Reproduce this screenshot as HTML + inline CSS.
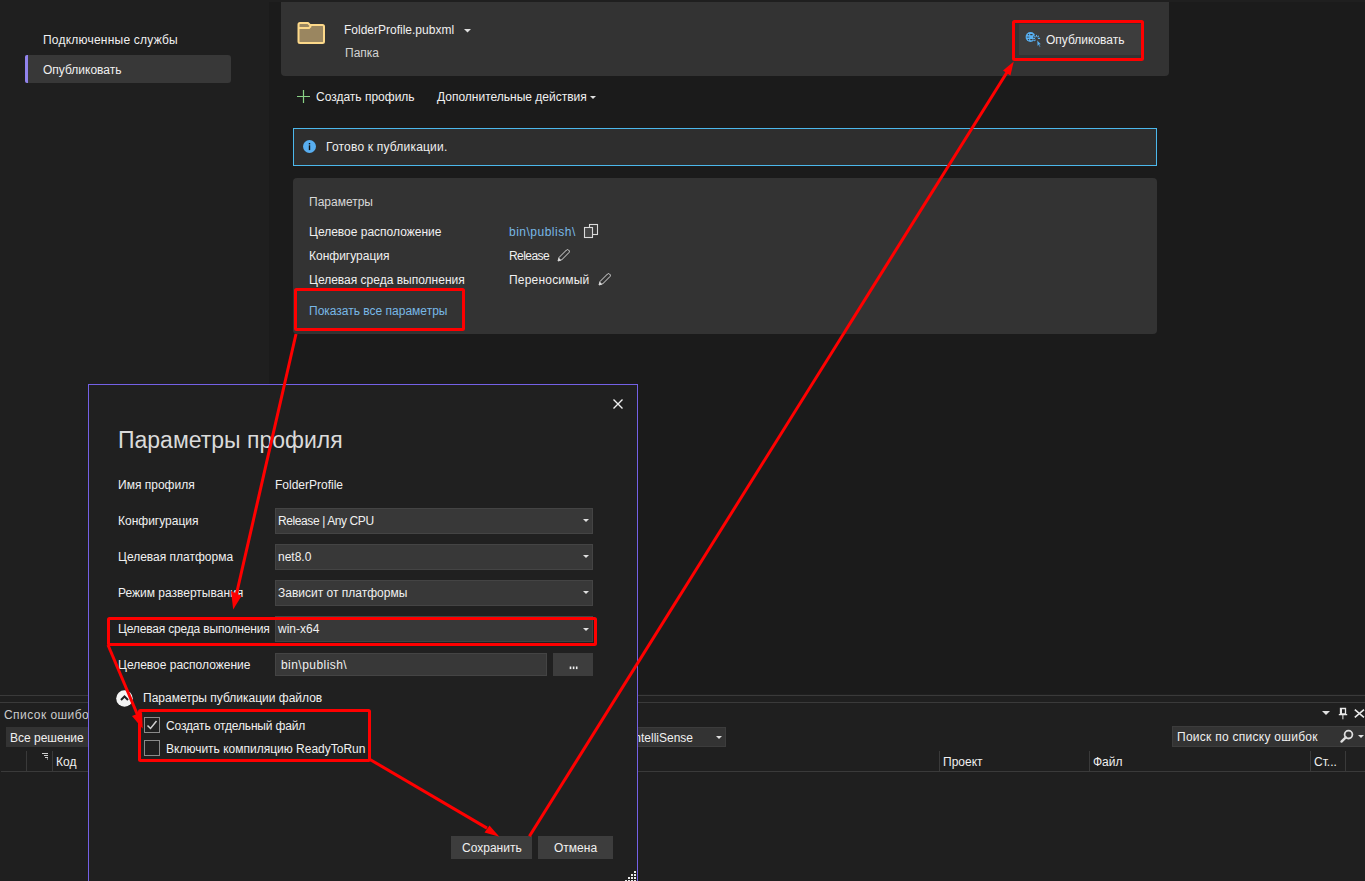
<!DOCTYPE html>
<html><head><meta charset="utf-8">
<style>
*{margin:0;padding:0;box-sizing:border-box}
html,body{width:1365px;height:881px;overflow:hidden;background:#1f1f1f;font-family:"Liberation Sans",sans-serif;font-size:12px;color:#f0f0f0;position:relative}
.a{position:absolute;white-space:nowrap}
.t{position:absolute;white-space:nowrap;line-height:14px}
svg{position:absolute;overflow:visible}
.cb{position:absolute;background:#383838;border:1px solid #444444}
</style></head><body>
<!-- sidebar -->
<div class="t" style="left:43px;top:33px;letter-spacing:0.22px">Подключенные службы</div>
<div class="a" style="left:25px;top:55px;width:206px;height:28px;background:#383838;border-radius:3px"></div>
<div class="a" style="left:25px;top:55px;width:3px;height:28px;background:#9183ec;border-radius:2px 0 0 2px"></div>
<div class="t" style="left:43px;top:63px">Опубликовать</div>

<!-- main area -->
<div class="a" style="left:269px;top:2px;width:1096px;height:692px;background:#1b1b1b"></div>

<!-- header card -->
<div class="a" style="left:281px;top:2px;width:888px;height:74px;background:#333333;border-radius:0 0 4px 4px"></div>
<svg style="left:297px;top:22px" width="28" height="22" viewBox="0 0 28 22">
  <path d="M1.5 2.5 Q1.5 1 3 1 H11 L13 3 H25.5 Q27 3 27 4.5 V19.5 Q27 21 25.5 21 H3 Q1.5 21 1.5 19.5 Z" fill="#9a8660" stroke="#fdd98a" stroke-width="2" stroke-linejoin="round"/>
  <path d="M2 6 H12 L14 4" fill="none" stroke="#fdd98a" stroke-width="2"/>
</svg>
<div class="t" style="left:344px;top:23px">FolderProfile.pubxml</div>
<svg style="left:464px;top:29px" width="8" height="4"><path d="M0 0 H7 L3.5 3.5Z" fill="#e0e0e0"/></svg>
<div class="t" style="left:345px;top:46px;color:#d4d4d4">Папка</div>

<!-- publish button -->
<div class="a" style="left:1019px;top:24px;width:122px;height:31px;background:#3d3d3d"></div>
<svg style="left:1022px;top:29px" width="22" height="20" viewBox="0 0 22 20">
  <circle cx="8.5" cy="8" r="4.9" fill="#58b0f2"/>
  <circle cx="14.5" cy="9.2" r="3.4" fill="#3d3d3d"/>
  <g fill="#3a3a3a">
    <rect x="5.8" y="4.9" width="1.4" height="1.3" rx="0.6"/>
    <rect x="8.1" y="4.9" width="2.6" height="1.3" rx="0.6"/>
    <rect x="4.6" y="7.4" width="2.9" height="1.3" rx="0.6" fill-opacity="0.6"/>
    <rect x="5.8" y="9.9" width="1.4" height="1.3" rx="0.6"/>
    <rect x="8.1" y="9.9" width="2.6" height="1.3" rx="0.6"/>
  </g>
  <g stroke="#58b0f2" stroke-width="1.1" stroke-linecap="round">
    <path d="M14.5 6.2 V7.2 M12.6 7.2 L13.2 7.8 M16.4 7.2 L15.8 7.8 M11.6 9.4 H12.6 M16.4 9.4 H17.6 M12.6 11.6 L13.2 11"/>
  </g>
  <path d="M15 11 L15.3 17.2 L16.6 16 L17.7 18.2 L18.5 17.8 L17.5 15.6 L19 15.2 Z" fill="#58b0f2" stroke="#3d3d3d" stroke-width="0.5"/>
</svg>
<div class="t" style="left:1046px;top:33px">Опубликовать</div>

<!-- action row -->
<svg style="left:297px;top:90px" width="13" height="13"><path d="M6.5 0 V13 M0 6.5 H13" stroke="#89d185" stroke-width="1.2"/></svg>
<div class="t" style="left:316px;top:90px">Создать профиль</div>
<div class="t" style="left:437px;top:90px">Дополнительные действия</div>
<svg style="left:590px;top:96px" width="7" height="4"><path d="M0 0 H6 L3 3Z" fill="#e0e0e0"/></svg>

<!-- info bar -->
<div class="a" style="left:293px;top:128px;width:864px;height:38px;background:#2e2e2e;border:1px solid #4cb8ec"></div>
<svg style="left:303px;top:140px" width="13" height="13" viewBox="0 0 13 13">
  <circle cx="6.5" cy="6.5" r="6.5" fill="#58aef0"/>
  <rect x="5.8" y="5.3" width="1.4" height="4.8" fill="#111"/>
  <rect x="5.8" y="3" width="1.4" height="1.4" fill="#111"/>
</svg>
<div class="t" style="left:326px;top:140px;letter-spacing:0.2px">Готово к публикации.</div>

<!-- params card -->
<div class="a" style="left:293px;top:178px;width:864px;height:156px;background:#333333;border-radius:4px"></div>
<div class="t" style="left:309px;top:195px;color:#d8d8d8">Параметры</div>
<div class="t" style="left:309px;top:225px">Целевое расположение</div>
<div class="t" style="left:309px;top:249px">Конфигурация</div>
<div class="t" style="left:309px;top:273px">Целевая среда выполнения</div>
<div class="t" style="left:509px;top:225px;color:#78b8e6;letter-spacing:0.5px">bin\publish\</div>
<svg style="left:584px;top:224px" width="15" height="15" viewBox="0 0 15 15">
  <rect x="5.5" y="0.5" width="8" height="10" fill="#3a3a3a" stroke="#dadada" stroke-width="1.1"/>
  <rect x="0.5" y="3.5" width="8" height="10" fill="#444" stroke="#dadada" stroke-width="1.1"/>
</svg>
<div class="t" style="left:509px;top:249px;letter-spacing:-0.55px">Release</div>
<svg style="left:557px;top:249px" width="13" height="13" viewBox="0 0 13 13">
  <path d="M1 12 L2 8.5 L9.5 1 Q10.5 0.2 11.5 1 L12 1.5 Q12.8 2.5 12 3.5 L4.5 11 Z" fill="none" stroke="#dcdcdc" stroke-width="1"/>
  <path d="M1 12 L2 9 L4 11Z" fill="#dcdcdc"/>
</svg>
<div class="t" style="left:509px;top:273px;letter-spacing:0.2px">Переносимый</div>
<svg style="left:598px;top:273px" width="13" height="13" viewBox="0 0 13 13">
  <path d="M1 12 L2 8.5 L9.5 1 Q10.5 0.2 11.5 1 L12 1.5 Q12.8 2.5 12 3.5 L4.5 11 Z" fill="none" stroke="#dcdcdc" stroke-width="1"/>
  <path d="M1 12 L2 9 L4 11Z" fill="#dcdcdc"/>
</svg>
<div class="t" style="left:309px;top:304px;color:#78b8e6">Показать все параметры</div>

<!-- bottom panel (error list) -->
<div class="a" style="left:0;top:694px;width:1365px;height:187px;background:#1f1f1f"></div>
<div class="a" style="left:0;top:695px;width:1365px;height:1px;background:#3a3a3a"></div>
<div class="a" style="left:0;top:702px;width:1365px;height:1px;background:#3a3a3a"></div>
<div class="t" style="left:4px;top:708px;color:#cccccc;letter-spacing:0.45px">Список ошибок</div>
<svg style="left:1322px;top:711px" width="8" height="5"><path d="M0 0 H8 L4 4Z" fill="#e0e0e0"/></svg>
<svg style="left:1338px;top:707px" width="10" height="13" viewBox="0 0 10 13">
  <path d="M2.5 1.5 H7.5 V7 H2.5 Z" fill="none" stroke="#e8e8e8" stroke-width="1.3"/>
  <rect x="2" y="1" width="2" height="6.5" fill="#e8e8e8"/>
  <path d="M0.8 7.6 H9.2" stroke="#e8e8e8" stroke-width="1.3"/><path d="M4.9 7.6 V12.3" stroke="#e8e8e8" stroke-width="1"/>
</svg>
<svg style="left:1354px;top:709px" width="11" height="9" viewBox="0 0 11 9"><path d="M0.8 0.6 L10 8.4 M10 0.6 L0.8 8.4" stroke="#e8e8e8" stroke-width="1.6"/></svg>

<div class="a" style="left:6px;top:727px;width:120px;height:20px;background:#333333"></div>
<div class="t" style="left:10px;top:731px">Все решение</div>

<div class="a" style="left:560px;top:727px;width:166px;height:20px;background:#333333;border:1px solid #3c3c3c"></div>
<div class="t" style="left:560px;top:731px;text-align:right;width:133px">Сборка + IntelliSense</div>
<svg style="left:716px;top:736px" width="7" height="4"><path d="M0 0 H6 L3 3Z" fill="#e0e0e0"/></svg>

<div class="a" style="left:1172px;top:726px;width:196px;height:21px;background:#333333;border:1px solid #3c3c3c"></div>
<div class="t" style="left:1177px;top:730px;letter-spacing:0.27px">Поиск по списку ошибок</div>
<svg style="left:1340px;top:729px" width="14" height="14" viewBox="0 0 14 14">
  <circle cx="8.5" cy="5.6" r="3.9" fill="none" stroke="#dcdcdc" stroke-width="1.8"/>
  <path d="M5.8 8.3 L1.5 12.6" stroke="#dcdcdc" stroke-width="2.4" stroke-linecap="round"/>
</svg>
<svg style="left:1358px;top:735px" width="7" height="4"><path d="M0 0 H6 L3 3Z" fill="#e0e0e0"/></svg>

<!-- column headers -->
<div class="a" style="left:26px;top:751px;width:1px;height:20px;background:#3a3a3a"></div>
<div class="a" style="left:52px;top:751px;width:1px;height:20px;background:#3a3a3a"></div>
<svg style="left:42px;top:753px" width="7" height="7" viewBox="0 0 7 7"><path d="M0 0.5 H6 M2 2.5 H6 M3 4.5 H6 M5 6 H6" stroke="#cfcfcf" stroke-width="1"/></svg>
<div class="t" style="left:56px;top:755px">Код</div>
<div class="a" style="left:939px;top:751px;width:1px;height:20px;background:#3a3a3a"></div>
<div class="t" style="left:943px;top:755px">Проект</div>
<div class="a" style="left:1089px;top:751px;width:1px;height:20px;background:#3a3a3a"></div>
<div class="t" style="left:1093px;top:755px">Файл</div>
<div class="a" style="left:1310px;top:751px;width:1px;height:20px;background:#3a3a3a"></div>
<div class="t" style="left:1314px;top:755px">Ст...</div>
<div class="a" style="left:1345px;top:751px;width:1px;height:20px;background:#3a3a3a"></div>
<div class="a" style="left:1px;top:771px;width:1364px;height:1px;background:#3a3a3a"></div>

<!-- dialog -->
<div class="a" style="left:88px;top:384px;width:550px;height:510px;background:#202020;border:1px solid #7461e6"></div>
<svg style="left:613px;top:399px" width="10" height="10" viewBox="0 0 10 10"><path d="M0.5 0.5 L9.5 9.5 M9.5 0.5 L0.5 9.5" stroke="#f0f0f0" stroke-width="1.4"/></svg>
<div class="a" style="left:118px;top:427px;font-size:23px;line-height:27px;color:#dadada">Параметры профиля</div>

<div class="t" style="left:118px;top:478px">Имя профиля</div>
<div class="t" style="left:275px;top:478px">FolderProfile</div>

<div class="t" style="left:118px;top:514px">Конфигурация</div>
<div class="cb" style="left:275px;top:508px;width:318px;height:26px"></div>
<div class="t" style="left:278px;top:514px;letter-spacing:-0.4px">Release | Any CPU</div>
<svg style="left:583px;top:519px" width="7" height="4"><path d="M0 0 H6 L3 3Z" fill="#e0e0e0"/></svg>

<div class="t" style="left:118px;top:550px">Целевая платформа</div>
<div class="cb" style="left:275px;top:544px;width:318px;height:26px"></div>
<div class="t" style="left:278px;top:550px">net8.0</div>
<svg style="left:583px;top:555px" width="7" height="4"><path d="M0 0 H6 L3 3Z" fill="#e0e0e0"/></svg>

<div class="t" style="left:118px;top:586px">Режим развертывания</div>
<div class="cb" style="left:275px;top:580px;width:318px;height:26px"></div>
<div class="t" style="left:278px;top:586px">Зависит от платформы</div>
<svg style="left:583px;top:591px" width="7" height="4"><path d="M0 0 H6 L3 3Z" fill="#e0e0e0"/></svg>

<div class="t" style="left:118px;top:622px;letter-spacing:-0.17px">Целевая среда выполнения</div>
<div class="cb" style="left:275px;top:616px;width:318px;height:26px"></div>
<div class="t" style="left:278px;top:622px">win-x64</div>
<svg style="left:583px;top:628px" width="7" height="4"><path d="M0 0 H6 L3 3Z" fill="#e0e0e0"/></svg>

<div class="t" style="left:118px;top:658px">Целевое расположение</div>
<div class="cb" style="left:275px;top:653px;width:272px;height:23px"></div>
<div class="t" style="left:281px;top:658px;letter-spacing:0.45px">bin\publish\</div>
<div class="a" style="left:553px;top:653px;width:40px;height:23px;background:#3d3d3d"></div>
<svg style="left:569px;top:666px" width="10" height="4" viewBox="0 0 10 4"><g fill="#f0f0f0"><rect x="0.7" y="0.5" width="1.6" height="2.6"/><rect x="3.8" y="0.5" width="1.6" height="2.6"/><rect x="6.9" y="0.5" width="1.6" height="2.6"/></g></svg>

<svg style="left:116px;top:690px" width="18" height="17" viewBox="0 0 18 17">
  <circle cx="8.5" cy="8.5" r="8.3" fill="#f4f4f4"/>
  <path d="M5 10 L8.5 6.5 L12 10" fill="none" stroke="#202020" stroke-width="2"/>
</svg>
<div class="t" style="left:143px;top:691px">Параметры публикации файлов</div>

<div class="a" style="left:144px;top:717px;width:16px;height:16px;border:1px solid #8a8a8a"></div>
<svg style="left:146px;top:719px" width="12" height="12" viewBox="0 0 12 12"><path d="M1.5 6.5 L4.5 9.5 L10.5 2" fill="none" stroke="#d0d0d0" stroke-width="1.5"/></svg>
<div class="t" style="left:166px;top:719px;letter-spacing:-0.15px">Создать отдельный файл</div>
<div class="a" style="left:144px;top:740px;width:16px;height:16px;border:1px solid #8a8a8a"></div>
<div class="t" style="left:166px;top:742px">Включить компиляцию ReadyToRun</div>

<div class="a" style="left:451px;top:836px;width:81px;height:23px;background:#3d3d3d"></div>
<div class="t" style="left:462px;top:841px">Сохранить</div>
<div class="a" style="left:538px;top:836px;width:75px;height:23px;background:#3d3d3d"></div>
<div class="t" style="left:554px;top:841px">Отмена</div>

<svg style="left:624px;top:870px" width="14" height="11" viewBox="0 0 14 11">
  <g fill="#e8e8e8">
  <rect x="10" y="1" width="2" height="2"/>
  <rect x="7" y="4" width="2" height="2"/><rect x="10" y="4" width="2" height="2"/>
  <rect x="4" y="7" width="2" height="2"/><rect x="7" y="7" width="2" height="2"/><rect x="10" y="7" width="2" height="2"/>
  <rect x="1" y="10" width="2" height="2"/><rect x="4" y="10" width="2" height="2"/><rect x="7" y="10" width="2" height="2"/><rect x="10" y="10" width="2" height="2"/>
  </g>
</svg>

<!-- red annotations -->
<svg style="left:0;top:0" width="1365" height="881">
  <g fill="none" stroke="#ff0000" stroke-width="3" stroke-linejoin="round">
    <rect x="1013.5" y="21.5" width="129" height="38" rx="1"/>
    <rect x="295.5" y="289.5" width="168" height="40" rx="1"/>
    <rect x="108.5" y="618.5" width="487" height="26" rx="1"/>
    <rect x="139.5" y="710.5" width="230" height="50" rx="1"/>
    <path d="M296 334 L236 596"/>
    <path d="M108 645 L138 716"/>
    <path d="M370 759.5 L487 828.1"/>
    <path d="M529.4 836.3 L1007.5 71.5"/>
  </g>
  <g fill="#ff0000">
    <path d="M233.2 609.5 L231 591 L241.5 596 Z"/>
    <path d="M142.7 728.7 L132 716 L142 712 Z"/>
    <path d="M499.4 836.7 L484.5 832.6 L489.5 825.4 Z"/>
    <path d="M1013.8 61.5 L1003 70.6 L1010.4 75.4 Z"/>
  </g>
</svg>

</body></html>
